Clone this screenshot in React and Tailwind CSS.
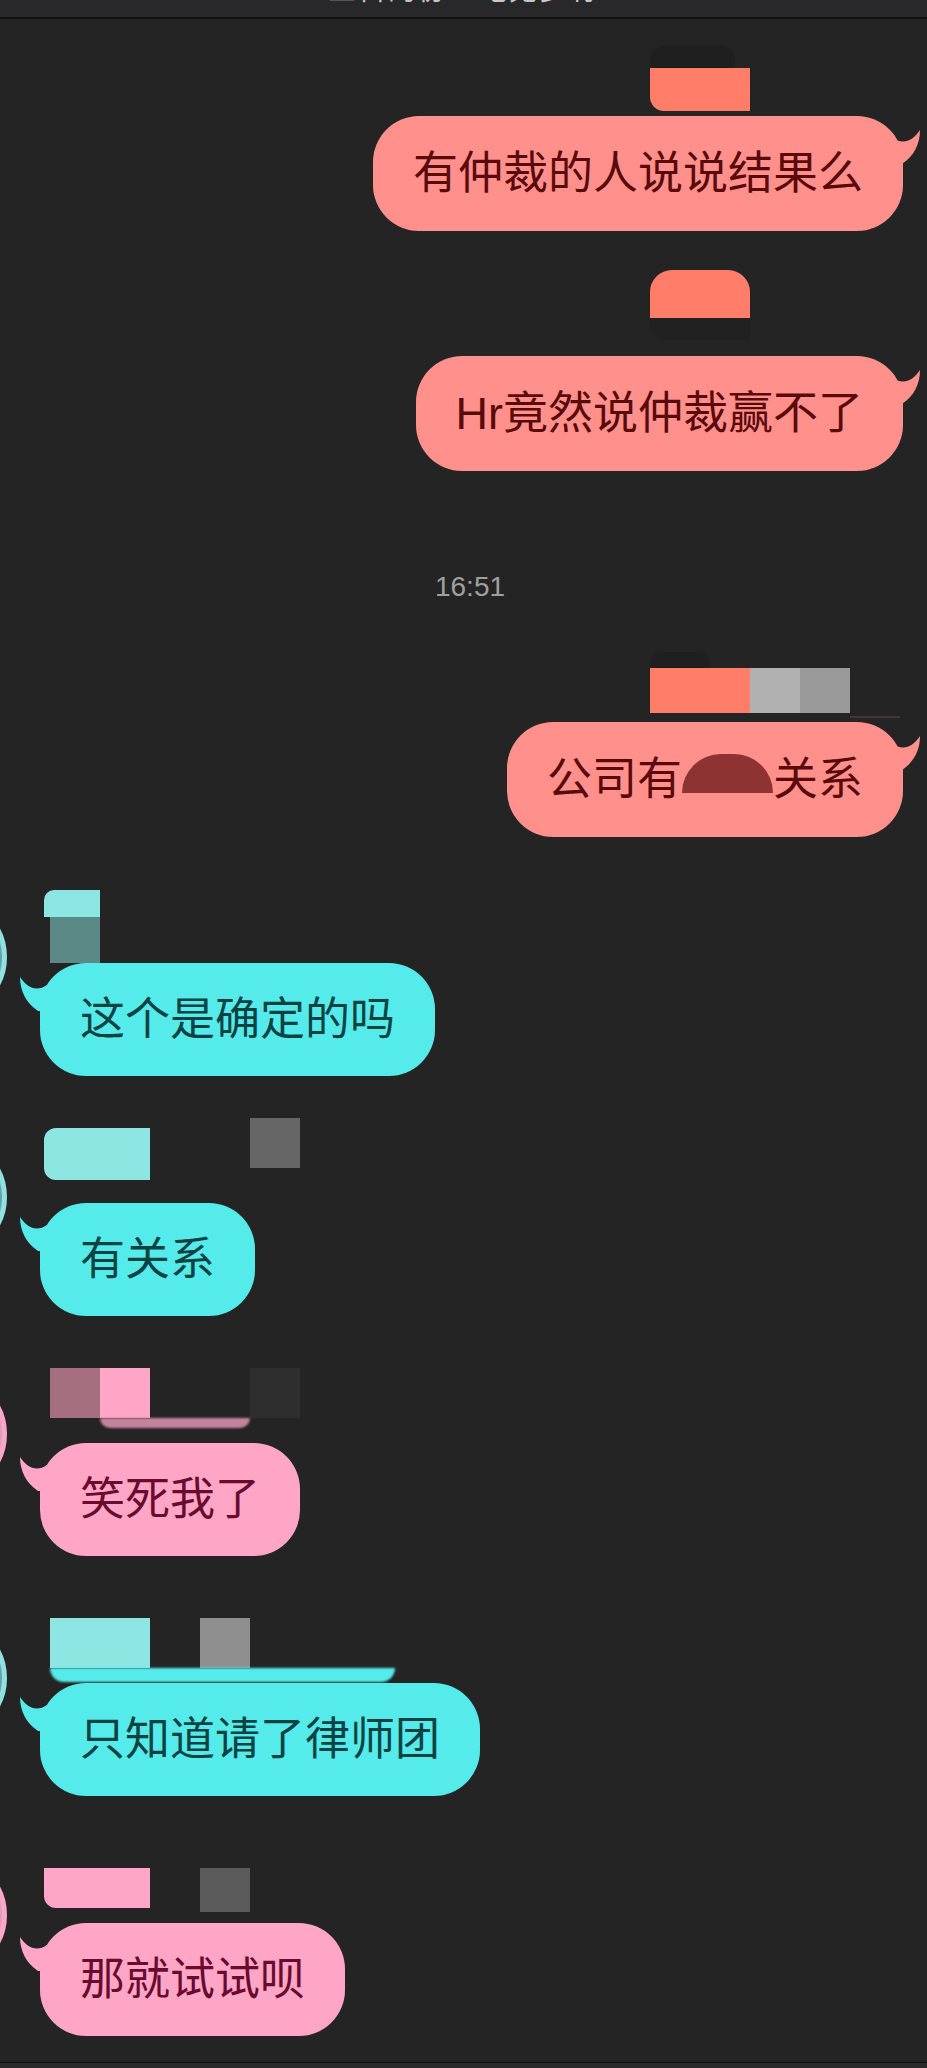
import React from "react";

function Tail({ fill, side }) {
  const pos = side === "right" ? "absolute -right-[20px] top-[10px]" : "absolute -left-[23px] top-[10px]";
  return (
    <svg className={pos} width="30" height="40" viewBox="0 0 30 40">
      <g transform={side === "right" ? undefined : "translate(30,0) scale(-1,1)"}>
        <path d="M0,12 C10,19 20,15 27,4 C27,18 21,30 9,38 L0,38 Z" fill={fill} />
      </g>
    </svg>
  );
}

function RightBubble({ children }) {
  return (
    <div className="relative rounded-[46px] bg-[#ff908c] px-[40px] py-[35px] text-[45px] leading-[45px] text-[#5a0a0a] whitespace-nowrap">
      <Tail fill="#ff908c" side="right" />
      {children}
    </div>
  );
}

function LeftBubble({ tone, children }) {
  const teal = tone === "teal";
  return (
    <div
      className={
        teal
          ? "relative rounded-[46px] bg-[#55ebeb] px-[40px] py-[34px] text-[45px] leading-[45px] text-[#0b4343] whitespace-nowrap"
          : "relative rounded-[46px] bg-[#ffa6c6] px-[40px] py-[34px] text-[45px] leading-[45px] text-[#6a0a2e] whitespace-nowrap"
      }
    >
      <Tail fill={teal ? "#55ebeb" : "#ffa6c6"} side="left" />
      {children}
    </div>
  );
}

function Avatar({ tone, offset }) {
  return (
    <div
      className={
        (tone === "teal"
          ? "border-[#8ee2df] bg-[#6a9fb0] "
          : "border-[#ffa6c6] bg-[#d9a0b8] ") +
        "w-[120px] h-[120px] shrink-0 rounded-full border-[5px] -ml-[113px] " +
        offset
      }
    />
  );
}

export default function App() {
  return (
    <div className="w-[927px] min-h-[2068px] bg-[#242424] flex flex-col [font-family:'Liberation_Sans','Noto_Sans_CJK_SC',sans-serif] overflow-hidden">
      {/* header */}
      <div className="h-[17px] bg-[#28282a] border-b-2 border-[#121212] overflow-hidden flex justify-center box-content">
        <div className="-mt-[23px] text-[28px] leading-[28px] text-[#c8c8c8] tracking-[2px]">三百的协 · 电无多有</div>
      </div>

      {/* msg 1 */}
      <div className="mt-[27px] flex flex-col items-end pr-[24px]">
        <div className="mr-[153px] flex flex-col items-start h-[70px]">
          <div className="w-[85px] h-[22px] rounded-t-[14px] bg-[#1f1f1f]" />
          <div className="w-[100px] h-[43px] bg-[#ff7d69] rounded-bl-[14px]" />
        </div>
        <RightBubble>有仲裁的人说说结果么</RightBubble>
      </div>

      {/* msg 2 */}
      <div className="mt-[29px] flex flex-col items-end pr-[24px]">
        <div className="mr-[153px] flex flex-col items-start h-[96px]">
          <div className="mt-[10px] w-[100px] h-[48px] bg-[#ff7d69] rounded-t-[22px] blur-[0.5px]" />
          <div className="w-[100px] h-[22px] rounded-bl-[16px] bg-[#212121]" />
        </div>
        <RightBubble>Hr竟然说仲裁赢不了</RightBubble>
      </div>

      {/* timestamp */}
      <div className="mt-[99px] pl-[13px] text-center text-[28px] leading-[34px] text-[#a0a0a0]">16:51</div>

      {/* msg 3 */}
      <div className="mt-[46px] flex flex-col items-end pr-[24px]">
        <div className="mr-[3px] w-[250px] flex flex-col items-start h-[72px]">
          <div className="mt-[2px] w-[60px] h-[16px] rounded-t-[12px] bg-[#1f1f1f]" />
          <div className="flex">
            <div className="w-[100px] h-[45px] bg-[#ff7d69]" />
            <div className="w-[50px] h-[45px] bg-[#b1b1b1]" />
            <div className="w-[50px] h-[45px] bg-[#9a9a9a]" />
          </div>
          <div className="ml-[200px] mt-[3px] w-[50px] h-[2px] bg-[#4a3333]" />
        </div>
        <RightBubble>
          <div className="flex items-start">
            <span>公司有</span>
            <span className="-mt-[3px] w-[91px] h-[39px] rounded-t-[46px] bg-[#8e3232]" />
            <span>关系</span>
          </div>
        </RightBubble>
      </div>

      {/* msg 4 */}
      <div className="mt-[53px] flex items-start">
        <Avatar tone="teal" offset="mt-[7px]" />
        <div className="ml-[33px] flex flex-col items-start">
          <div className="h-[73px] flex flex-col items-start">
            <div className="ml-[4px] w-[56px] h-[27px] bg-[#8de6e2] rounded-tl-[10px]" />
            <div className="ml-[10px] w-[50px] h-[46px] bg-[#5b8986]" />
          </div>
          <LeftBubble tone="teal">这个是确定的吗</LeftBubble>
        </div>
      </div>

      {/* msg 5 */}
      <div className="mt-[42px] flex items-start">
        <Avatar tone="teal" offset="mt-[19px]" />
        <div className="ml-[33px] flex flex-col items-start">
          <div className="h-[85px] flex items-start">
            <div className="ml-[4px] mt-[10px] w-[106px] h-[52px] bg-[#8de6e2] rounded-l-[12px]" />
            <div className="ml-[100px] w-[50px] h-[50px] bg-[#666666]" />
          </div>
          <LeftBubble tone="teal">有关系</LeftBubble>
        </div>
      </div>

      {/* msg 6 */}
      <div className="mt-[51px] flex items-start">
        <Avatar tone="pink" offset="mt-[7px]" />
        <div className="ml-[33px] flex flex-col items-start">
          <div className="h-[76px] flex flex-col items-start">
            <div className="mt-[1px] ml-[10px] flex">
              <div className="w-[50px] h-[50px] bg-[#a66f80]" />
              <div className="w-[50px] h-[50px] bg-[#ffa6c6]" />
              <div className="ml-[100px] w-[50px] h-[50px] bg-[#2e2e2e]" />
            </div>
            <div className="ml-[60px] w-[150px] h-[10px] bg-[#c5839b] rounded-b-[30px] blur-[1px]" />
          </div>
          <LeftBubble tone="pink">笑死我了</LeftBubble>
        </div>
      </div>

      {/* msg 7 */}
      <div className="mt-[59px] flex items-start">
        <Avatar tone="teal" offset="mt-[3px]" />
        <div className="ml-[33px] flex flex-col items-start">
          <div className="h-[68px] flex flex-col items-start">
            <div className="mt-[3px] ml-[10px] flex">
              <div className="w-[100px] h-[50px] bg-[#8de6e2]" />
              <div className="ml-[50px] w-[50px] h-[50px] bg-[#8f8f8f]" />
            </div>
            <div className="ml-[10px] w-[345px] h-[14px] bg-[#55ebeb] rounded-b-[40px] blur-[1px]" />
          </div>
          <LeftBubble tone="teal">只知道请了律师团</LeftBubble>
        </div>
      </div>

      {/* msg 8 */}
      <div className="mt-[70px] flex items-start">
        <Avatar tone="pink" offset="-mt-[11px]" />
        <div className="ml-[33px] flex flex-col items-start">
          <div className="h-[57px] flex items-start">
            <div className="mt-[2px] ml-[4px] w-[106px] h-[40px] bg-[#ffa6c6] rounded-bl-[12px]" />
            <div className="mt-[2px] ml-[50px] w-[50px] h-[44px] bg-[#5a5a5a]" />
          </div>
          <LeftBubble tone="pink">那就试试呗</LeftBubble>
        </div>
      </div>

      {/* footer */}
      <div className="mt-auto h-[1px] bg-[#0f0f0f]" />
      <div className="h-[5px] bg-[#2a2a2a]" />
    </div>
  );
}
